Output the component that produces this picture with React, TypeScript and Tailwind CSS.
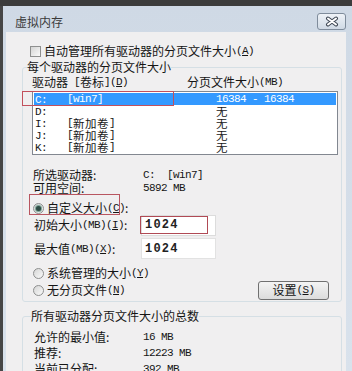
import React from "react";

function M({ children, u }: { children: React.ReactNode; u?: boolean }) {
  return (
    <span
      className={
        u
          ? "font-['Liberation_Mono',monospace] text-[11px] tracking-[-0.6px] whitespace-pre underline"
          : "font-['Liberation_Mono',monospace] text-[11px] tracking-[-0.6px] whitespace-pre"
      }
    >
      {children}
    </span>
  );
}

function Key({ k }: { k: string }) {
  return (
    <>
      <M>(</M>
      <M u>{k}</M>
      <M>)</M>
    </>
  );
}

function Radio({ on }: { on?: boolean }) {
  return (
    <span className="w-[11px] h-[11px] rounded-full border border-[#8e8f8f] bg-linear-to-br from-[#d6d6d6] to-[#fafafa] flex items-center justify-center shrink-0">
      {on ? <span className="w-[5px] h-[5px] rounded-full bg-[#2f4c45] shadow-[0_0_1px_1px_#6f9a8c]" /> : null}
    </span>
  );
}

function Row({ a, b, sel }: { a: React.ReactNode; b: React.ReactNode; sel?: boolean }) {
  return (
    <div
      className={
        sel
          ? "h-[12px] leading-[12px] flex items-center pl-[1px] bg-[#3399ff] text-white"
          : "h-[12px] leading-[12px] flex items-center pl-[1px]"
      }
    >
      <span className="w-[181px] flex items-center">{a}</span>
      <span className="flex items-center">{b}</span>
    </div>
  );
}

function Drive({ l, v }: { l: string; v?: React.ReactNode }) {
  return (
    <>
      <span className="w-[32px]">
        <M>{l}</M>
      </span>
      {v}
    </>
  );
}

export default function App() {
  const nv = (
    <>
      <M>[</M>
      <span className="text-[11.5px] tracking-[0.5px]">新加卷</span>
      <M>]</M>
    </>
  );
  const wu = <span className="text-[11.5px]">无</span>;
  return (
    <div className="w-[352px] h-[371px] overflow-hidden bg-[#3c3c3c] relative text-[12px] leading-[14px] text-[#151515] font-['Noto_Sans_CJK_SC',sans-serif]">
      <div className="h-[6px]" />
      <div className="flex h-[365px]">
        <div className="w-[3px] bg-[#464646]" />
        <div className="flex-1 bg-linear-to-b from-[#cfd9e5] to-[#d9e2ec] flex flex-col pl-[3px] pr-[6px]">
          {/* title bar */}
          <div className="h-[26px] flex items-start justify-between shrink-0">
            <span className="pt-[9px] pl-[9px] text-[#3a3a3a]">虚拟内存</span>
            <div className="mt-[7px] w-[29px] h-[17px] rounded-[3px] border border-[#7f8c9b] bg-linear-to-b from-[#eef2f7] to-[#d0dae5] flex items-center justify-center">
              <svg width="16" height="11" viewBox="0 0 16 11">
                <path d="M4 2.5 L12 8.5 M12 2.5 L4 8.5" stroke="#3d4653" strokeWidth="4" strokeLinecap="round" fill="none" />
                <path d="M4 2.5 L12 8.5 M12 2.5 L4 8.5" stroke="#ffffff" strokeWidth="2" strokeLinecap="round" fill="none" />
              </svg>
            </div>
          </div>
          {/* content */}
          <div className="flex-1 bg-[#f0eff0] flex flex-col pt-[12px] overflow-hidden">
            <div className="h-[16px] flex items-center pl-[24px] gap-[3px]">
              <span className="w-[11px] h-[11px] border border-[#8e8f8f] bg-linear-to-br from-[#d4d4d4] to-[#fafafa] shrink-0" />
              <span className="flex items-center">
                自动管理所有驱动器的分页文件大小<Key k="A" />
              </span>
            </div>

            <fieldset className="ml-[16px] mt-[1px] w-[320px] border border-[#d5dfe5] rounded-[3px] pb-[1px] shrink-0">
              <legend className="ml-[4px] leading-[16px]">每个驱动器的分页文件大小</legend>
              <div className="h-[14px] flex items-center pl-[9px]">
                <span className="w-[155px] flex items-center">
                  驱动器<M> [</M>卷标<M>]</M>
                  <Key k="D" />
                </span>
                <span className="flex items-center">
                  分页文件大小<M>(MB)</M>
                </span>
              </div>
              <div className="mt-[2px] ml-[9px] w-[306px] border border-[#828790] bg-white p-[1px]">
                <Row sel a={<Drive l="C:" v={<M>[win7]</M>} />} b={<M>16384 - 16384</M>} />
                <Row a={<Drive l="D:" />} b={wu} />
                <Row a={<Drive l="I:" v={nv} />} b={wu} />
                <Row a={<Drive l="J:" v={nv} />} b={wu} />
                <Row a={<Drive l="K:" v={nv} />} b={wu} />
              </div>

              <div className="mt-[13px] h-[13px] flex items-center pl-[10px]">
                <span className="w-[110px]">所选驱动器:</span>
                <M>C:  [win7]</M>
              </div>
              <div className="h-[13px] flex items-center pl-[10px]">
                <span className="w-[110px]">可用空间:</span>
                <M>5892 MB</M>
              </div>

              <div className="mt-[8px] h-[12px] flex items-center pl-[10px] gap-[3px]">
                <Radio on />
                <span className="flex items-center">
                  自定义大小<Key k="C" />:
                </span>
              </div>
              <div className="h-[22px] flex items-center pl-[11px]">
                <span className="w-[107px] flex items-center">
                  初始大小<M>(MB)</M>
                  <Key k="I" />:
                </span>
                <div className="w-[75px] h-[21px] bg-white border border-[#dcdcdc] flex items-center pl-[3px] font-['Liberation_Mono',monospace] text-[12px] tracking-[1.2px] font-semibold text-[#222]">
                  1024
                </div>
              </div>
              <div className="mt-[2px] h-[21px] flex items-center pl-[11px]">
                <span className="w-[107px] flex items-center">
                  最大值<M>(MB)</M>
                  <Key k="X" />:
                </span>
                <div className="w-[75px] h-[21px] bg-white border border-[#e2e2e2] flex items-center pl-[3px] font-['Liberation_Mono',monospace] text-[12px] tracking-[1.2px] font-semibold text-[#222]">
                  1024
                </div>
              </div>

              <div className="mt-[7px] h-[14px] flex items-center pl-[10px] gap-[3px]">
                <Radio />
                <span className="flex items-center">
                  系统管理的大小<Key k="Y" />
                </span>
              </div>
              <div className="h-[20px] flex items-center pl-[10px] gap-[3px] pr-[12px]">
                <Radio />
                <span className="flex items-center">
                  无分页文件<Key k="N" />
                </span>
                <div className="ml-auto w-[71px] h-[19px] rounded-[3px] border border-[#707070] bg-linear-to-b from-[#f4f4f4] to-[#dcdcdc] flex items-center justify-center">
                  设置<Key k="S" />
                </div>
              </div>
            </fieldset>

            <fieldset className="ml-[16px] mt-[6px] w-[320px] border border-[#d5dfe5] rounded-[3px] h-[80px] shrink-0">
              <legend className="ml-[8px] leading-[16px]">所有驱动器分页文件大小的总数</legend>
              <div className="mt-[5px] h-[16px] flex items-center pl-[11px]">
                <span className="w-[109px]">允许的最小值:</span>
                <M>16 MB</M>
              </div>
              <div className="h-[16px] flex items-center pl-[11px]">
                <span className="w-[109px]">推荐:</span>
                <M>12223 MB</M>
              </div>
              <div className="h-[16px] flex items-center pl-[11px]">
                <span className="w-[109px]">当前已分配:</span>
                <M>392 MB</M>
              </div>
            </fieldset>
          </div>
        </div>
      </div>

      {/* red annotation boxes */}
      <div className="absolute left-[22px] top-[91px] w-[152px] h-[15px] border-[1.5px] border-[#c2505c]" />
      <div className="absolute left-[29px] top-[194px] w-[91px] h-[21px] border-[1.5px] border-[#b85560]" />
      <div className="absolute left-[140px] top-[216px] w-[68px] h-[18px] border-[1.5px] border-[#b04a55]" />
    </div>
  );
}
